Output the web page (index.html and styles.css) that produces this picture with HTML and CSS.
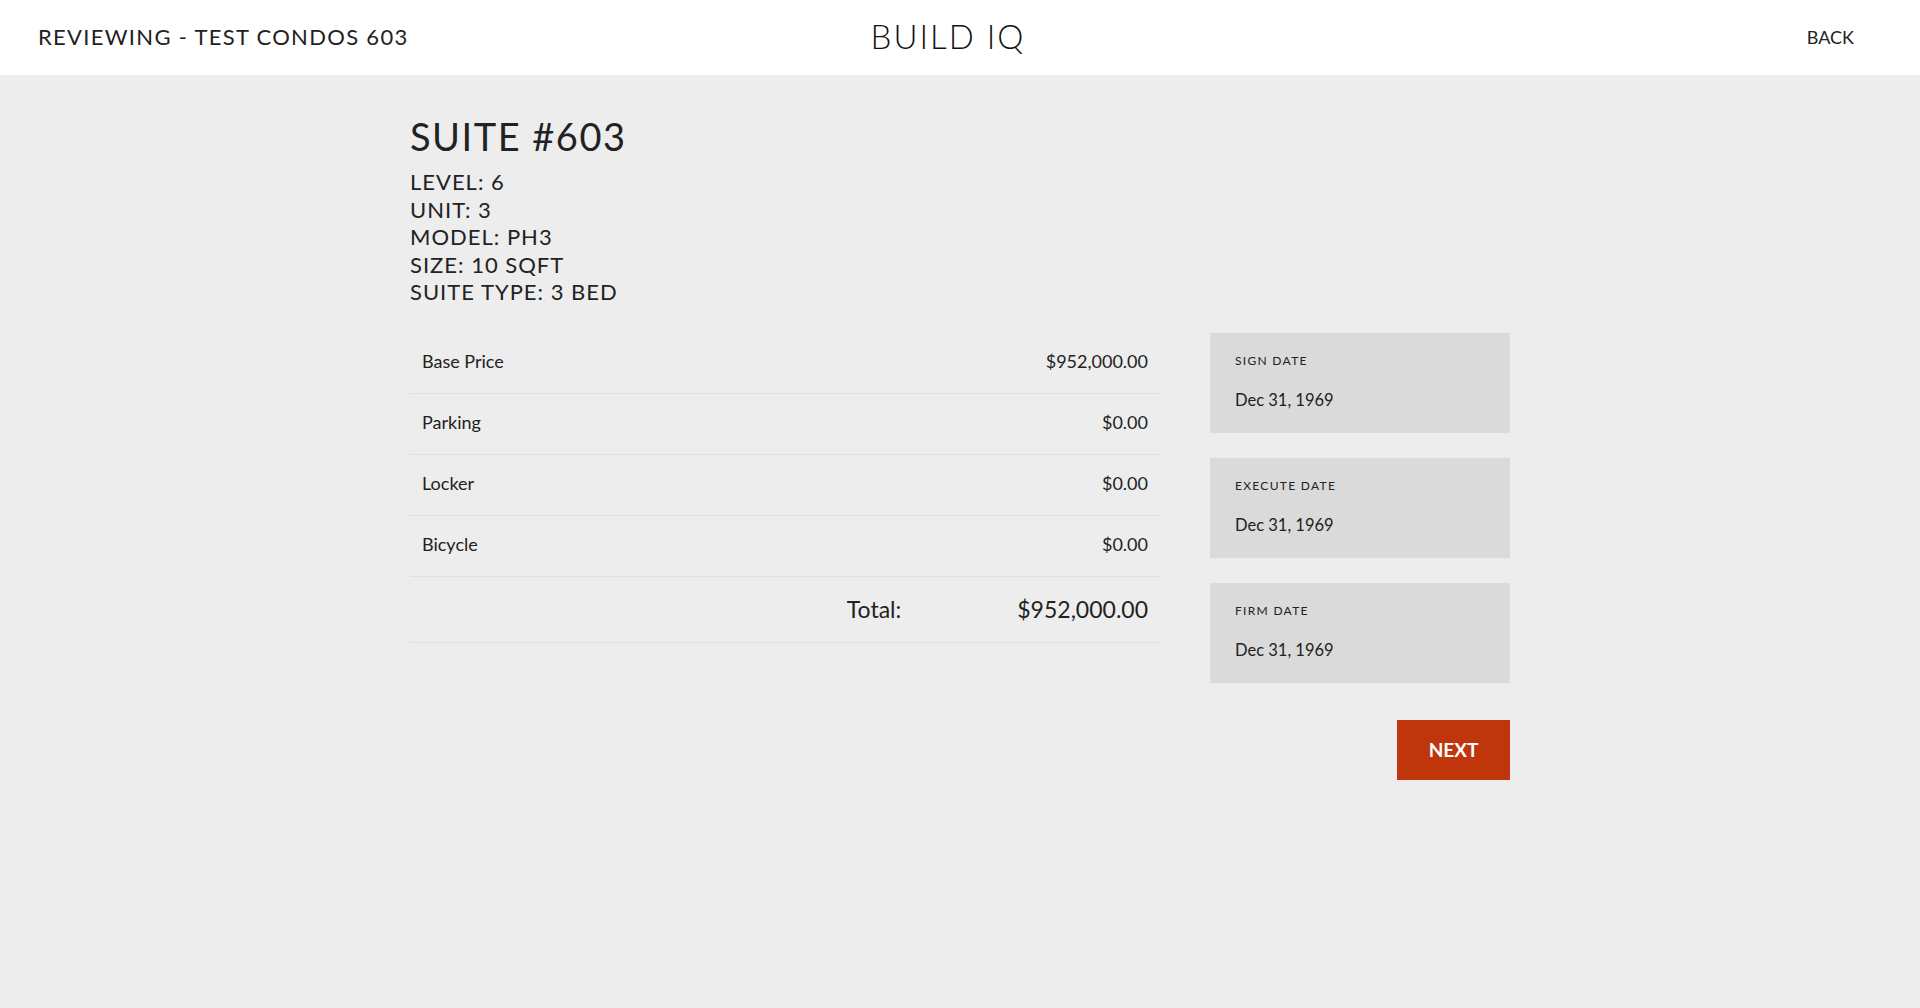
FILE: index.html
```html
<!DOCTYPE html>
<html lang="en">
<head>
<meta charset="utf-8">
<title>Build IQ - Reviewing</title>
<link rel="stylesheet" href="styles.css">
</head>
<body>
<header class="topbar">
  <div class="topbar-title">REVIEWING - TEST CONDOS 603</div>
  <div class="brand">BUILD IQ</div>
  <a class="back" href="#">BACK</a>
</header>
<main class="page">
  <section class="suite-info">
    <h1 class="suite-title">SUITE #603</h1>
    <ul class="specs">
      <li>LEVEL: 6</li>
      <li>UNIT: 3</li>
      <li>MODEL: PH3</li>
      <li>SIZE: 10 SQFT</li>
      <li>SUITE TYPE: 3 BED</li>
    </ul>
  </section>
  <div class="review-grid">
    <div class="price-table">
      <div class="price-row"><span>Base Price</span><span>$952,000.00</span></div>
      <div class="price-row"><span>Parking</span><span>$0.00</span></div>
      <div class="price-row"><span>Locker</span><span>$0.00</span></div>
      <div class="price-row"><span>Bicycle</span><span>$0.00</span></div>
      <div class="total-row"><span class="total-label">Total:</span><span class="total-value">$952,000.00</span></div>
    </div>
    <aside class="dates">
      <div class="date-card">
        <div class="date-label">SIGN DATE</div>
        <div class="date-value">Dec 31, 1969</div>
      </div>
      <div class="date-card">
        <div class="date-label">EXECUTE DATE</div>
        <div class="date-value">Dec 31, 1969</div>
      </div>
      <div class="date-card">
        <div class="date-label">FIRM DATE</div>
        <div class="date-value">Dec 31, 1969</div>
      </div>
      <button class="next-btn" type="button">NEXT</button>
    </aside>
  </div>
</main>
</body>
</html>
```

FILE: styles.css
```css
* { box-sizing: border-box; }
html, body { margin: 0; padding: 0; }
body {
  background: #ededed;
  color: #222;
  font-family: Lato, "Open Sans", "Liberation Sans", sans-serif;
  min-height: 1008px;
}
.topbar {
  background: #fff;
  height: 75px;
  display: grid;
  grid-template-columns: 1fr auto 1fr;
  align-items: center;
  padding: 0 66px 0 38px;
}
.topbar-title {
  font-size: 22px;
  letter-spacing: 1.3px;
  color: #222;
  padding-bottom: 2px;
}
.brand {
  font-size: 33px;
  font-weight: 300;
  letter-spacing: 2px;
  color: #111;
  padding: 0 0 4px 4px;
}
.back {
  justify-self: end;
  font-size: 18px;
  color: #222;
  text-decoration: none;
  padding-bottom: 1px;
}
.page {
  width: 1100px;
  margin: 0 auto;
  padding-top: 38px;
}
.suite-title {
  margin: 0;
  font-size: 38px;
  line-height: 46px;
  font-weight: 400;
  letter-spacing: 1.5px;
}
.specs {
  list-style: none;
  margin: 9px 0 27px;
  padding: 0;
  font-size: 22px;
  line-height: 27.5px;
  letter-spacing: 1px;
}
.review-grid {
  display: grid;
  grid-template-columns: 750px 300px;
  column-gap: 50px;
  align-items: start;
}
.price-row {
  display: flex;
  justify-content: space-between;
  align-items: center;
  height: 61px;
  padding: 0 12px 4px 12px;
  border-bottom: 1px solid #e0e0e0;
  font-size: 18px;
}
.total-row {
  display: flex;
  justify-content: flex-end;
  align-items: center;
  height: 66px;
  padding: 0 12px 1px;
  border-bottom: 1px solid #e0e0e0;
  font-size: 23px;
  gap: 116px;
}
.dates {
  display: flex;
  flex-direction: column;
  align-items: flex-end;
  gap: 25px;
}
.date-card {
  width: 300px;
  height: 100px;
  background: #dadada;
  padding: 20px 25px 0;
}
.date-label {
  font-size: 12px;
  letter-spacing: 1.3px;
  color: #222;
  line-height: 16px;
}
.date-value {
  margin-top: 20px;
  font-size: 16.5px;
  line-height: 22px;
  color: #222;
}
.next-btn {
  margin-top: 12px;
  width: 113px;
  height: 60px;
  background: #bf360c;
  color: #fff;
  border: none;
  font-family: Lato, "Open Sans", sans-serif;
  font-size: 19px;
  font-weight: 700;
  cursor: pointer;
}
```
